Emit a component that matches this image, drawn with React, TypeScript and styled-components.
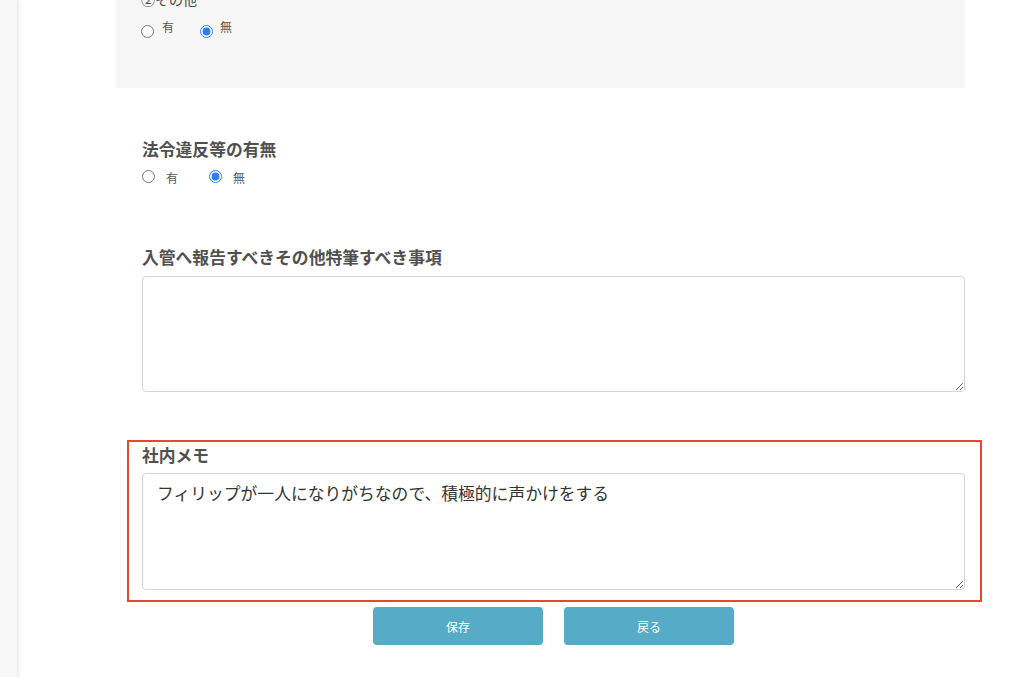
import styled, { createGlobalStyle } from "styled-components";

const GlobalStyle = createGlobalStyle`
  html, body {
    margin: 0;
    padding: 0;
    background: #ffffff;
    font-family: "Noto Sans CJK JP", "Noto Sans", sans-serif;
    overflow: hidden;
  }
`;

const Layout = styled.div`
  display: flex;
  height: 677px;
`;

const Sidebar = styled.aside`
  width: 17px;
  flex-shrink: 0;
  background: #f8f8f8;
  box-shadow: 1px 0 3px rgba(0, 0, 0, 0.08);
  border-right: 1px solid #ececec;
`;

const Main = styled.main`
  flex: 1;
  padding-left: 98px;
`;

const Form = styled.div`
  width: 849px;
  margin-top: -14px;
  display: flex;
  flex-direction: column;
`;

const GreyBox = styled.div`
  background: #f6f6f6;
  padding: 0 0 47px 25px;
`;

const SubLabel = styled.div`
  font-size: 14px;
  line-height: 26px;
  color: #444;
`;

const RadioRow = styled.div<{ $gap: number; $mt: number }>`
  display: flex;
  align-items: center;
  height: 20px;
  margin-top: ${(p) => p.$mt}px;
  gap: ${(p) => p.$gap}px;
`;

const RadioItem = styled.label<{ $space: number; $lift: number }>`
  display: flex;
  align-items: center;
  gap: ${(p) => p.$space}px;
  font-size: 12px;
  color: #555;
  cursor: pointer;

  span {
    position: relative;
    top: ${(p) => -p.$lift}px;
  }
`;

const Radio = styled.input.attrs({ type: "radio" })`
  margin: 0;
  width: 13px;
  height: 13px;
  accent-color: #2f7cf6;
`;

const Section = styled.div<{ $mt: number }>`
  padding-left: 26px;
  margin-top: ${(p) => p.$mt}px;
`;

const FieldLabel = styled.div`
  font-size: 16.8px;
  line-height: 24px;
  font-weight: 700;
  color: #505050;
`;

const TextArea = styled.textarea<{ $h: number }>`
  display: block;
  box-sizing: border-box;
  width: 100%;
  height: ${(p) => p.$h}px;
  margin-top: 7px;
  padding: 7px 14px;
  border: 1px solid #d2d5da;
  border-radius: 4px;
  font-family: "Noto Sans CJK JP", "Noto Sans", sans-serif;
  font-size: 16.8px;
  line-height: 24px;
  color: #333;
  background: #fff;
  outline: none;
`;

const Highlight = styled.div`
  margin: 48px -17px 0 11px;
  border: 2px solid #e8472f;
  padding: 1px 15px 10px 13px;

  ${TextArea} {
    margin-top: 6px;
  }
`;

const ButtonRow = styled.div`
  display: flex;
  justify-content: center;
  gap: 21px;
  margin: 5px -16px 0 10px;
`;

const Button = styled.button`
  width: 170px;
  height: 38px;
  border: none;
  border-radius: 4px;
  background: #56abc6;
  color: #fff;
  font-family: "Noto Sans CJK JP", "Noto Sans", sans-serif;
  font-size: 12px;
  cursor: pointer;
`;

const App = () => {
  return (
    <>
      <GlobalStyle />
      <Layout>
        <Sidebar />
        <Main>
          <Form>
            <GreyBox>
              <SubLabel>②その他</SubLabel>
              <RadioRow $gap={26} $mt={9}>
                <RadioItem $space={8} $lift={5}>
                  <Radio name="other" />
                  <span>有</span>
                </RadioItem>
                <RadioItem $space={7} $lift={5}>
                  <Radio name="other" defaultChecked />
                  <span>無</span>
                </RadioItem>
              </RadioRow>
            </GreyBox>

            <Section $mt={49}>
              <FieldLabel>法令違反等の有無</FieldLabel>
              <RadioRow $gap={31} $mt={5}>
                <RadioItem $space={11} $lift={-1}>
                  <Radio name="violation" />
                  <span>有</span>
                </RadioItem>
                <RadioItem $space={11} $lift={-1}>
                  <Radio name="violation" defaultChecked />
                  <span>無</span>
                </RadioItem>
              </RadioRow>
            </Section>

            <Section $mt={59}>
              <FieldLabel>入管へ報告すべきその他特筆すべき事項</FieldLabel>
              <TextArea $h={116} />
            </Section>

            <Highlight>
              <FieldLabel>社内メモ</FieldLabel>
              <TextArea
                $h={117}
                defaultValue="フィリップが一人になりがちなので、積極的に声かけをする"
              />
            </Highlight>

            <ButtonRow>
              <Button>保存</Button>
              <Button>戻る</Button>
            </ButtonRow>
          </Form>
        </Main>
      </Layout>
    </>
  );
};

export default App;
